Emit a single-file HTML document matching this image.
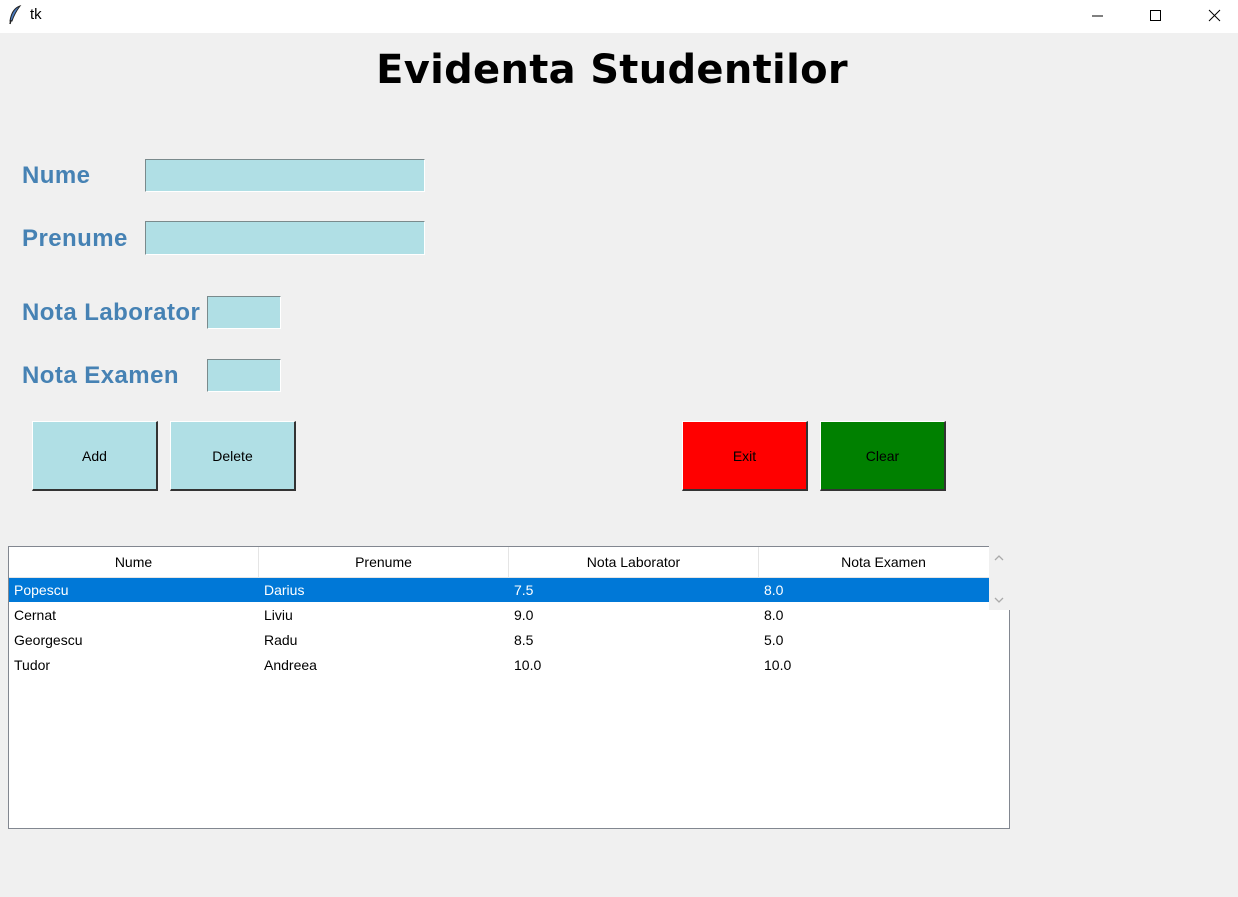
<!DOCTYPE html>
<html><head><style>
*{margin:0;padding:0;box-sizing:border-box}
body{width:1238px;height:897px;background:#f0f0f0;position:relative;overflow:hidden;font-family:"Liberation Sans",sans-serif}
.a{position:absolute}
.tb{left:0;top:0;width:1238px;height:33px;background:#fff}
.lbl{color:#4682b4;font-weight:bold;font-size:24px;letter-spacing:0.45px}
.ent{background:#b0dfe5;border-top:1px solid #7a8a8c;border-left:1px solid #7a8a8c;border-bottom:1px solid #fff;border-right:1px solid #fff}
.btn{height:70px;width:126px;border-top:1px solid #fff;border-left:1px solid #fff;border-right:2px solid #333;border-bottom:2px solid #333;font-size:14px;display:flex;align-items:center;justify-content:center;color:#000}
.t{font-size:14px;color:#000}
</style></head><body>
<div class="a tb"></div>
<svg class="a" style="left:8px;top:5px" width="14" height="20" viewBox="0 0 14 20"><path d="M12 1 C6 3 3 9 2 16 L4 16 C6 10 9 5 12 1Z" fill="#4a7bc0" stroke="#222" stroke-width="1"/><path d="M3 15 L2 19" stroke="#222" stroke-width="1.5"/></svg>
<div class="a" style="left:30px;top:6px;font-size:15px">tk</div>
<svg class="a" style="left:1091px;top:9px" width="135" height="14"><path d="M1 7H12" stroke="#000"/><rect x="59.5" y="1.5" width="10" height="10" fill="none" stroke="#000"/><path d="M118 1L129 12M129 1L118 12" stroke="#000"/></svg>
<div class="a" style="left:0;width:1224px;top:47px;text-align:center;font-size:40px;font-weight:bold;font-family:'DejaVu Sans',sans-serif;letter-spacing:0.3px">Evidenta Studentilor</div>
<div class="a lbl" style="left:22px;top:162px">Nume</div>
<div class="a lbl" style="left:22px;top:225px">Prenume</div>
<div class="a lbl" style="left:22px;top:299px">Nota Laborator</div>
<div class="a lbl" style="left:22px;top:362px">Nota Examen</div>
<div class="a ent" style="left:145px;top:159px;width:280px;height:33px"></div>
<div class="a ent" style="left:145px;top:221px;width:280px;height:34px"></div>
<div class="a ent" style="left:207px;top:296px;width:74px;height:33px"></div>
<div class="a ent" style="left:207px;top:359px;width:74px;height:33px"></div>
<div class="a btn" style="left:32px;top:421px;background:#b0dfe5">Add</div>
<div class="a btn" style="left:170px;top:421px;background:#b0dfe5">Delete</div>
<div class="a btn" style="left:682px;top:421px;background:#ff0000">Exit</div>
<div class="a btn" style="left:820px;top:421px;background:#008000">Clear</div>
<div class="a" style="left:8px;top:546px;width:1002px;height:283px;background:#fff;border:1px solid #828790"></div>
<div class="a" style="left:989px;top:546px;width:21px;height:64px;background:#f0f0f0"></div>
<svg class="a" style="left:992px;top:553px" width="14" height="52"><path d="M3 7L7 3L11 7" fill="none" stroke="#aaa" stroke-width="1.3"/><path d="M3 45L7 49L11 45" fill="none" stroke="#aaa" stroke-width="1.3"/></svg>
<div class="a" style="left:9px;top:547px;width:980px;height:31px;background:#fff;border-bottom:1px solid #e5e5e5"></div>
<div class="a" style="left:258px;top:547px;width:1px;height:30px;background:#e5e5e5"></div>
<div class="a" style="left:508px;top:547px;width:1px;height:30px;background:#e5e5e5"></div>
<div class="a" style="left:758px;top:547px;width:1px;height:30px;background:#e5e5e5"></div>
<div class="a t" style="left:9px;width:249px;top:554px;text-align:center">Nume</div>
<div class="a t" style="left:259px;width:249px;top:554px;text-align:center">Prenume</div>
<div class="a t" style="left:509px;width:249px;top:554px;text-align:center">Nota Laborator</div>
<div class="a t" style="left:759px;width:249px;top:554px;text-align:center">Nota Examen</div>
<div class="a" style="left:9px;top:578px;width:980px;height:24px;background:#0078d7"></div>
<div class="a t" style="left:14px;top:582px;color:#fff">Popescu</div><div class="a t" style="left:264px;top:582px;color:#fff">Darius</div><div class="a t" style="left:514px;top:582px;color:#fff">7.5</div><div class="a t" style="left:764px;top:582px;color:#fff">8.0</div>
<div class="a t" style="left:14px;top:607px">Cernat</div><div class="a t" style="left:264px;top:607px">Liviu</div><div class="a t" style="left:514px;top:607px">9.0</div><div class="a t" style="left:764px;top:607px">8.0</div>
<div class="a t" style="left:14px;top:632px">Georgescu</div><div class="a t" style="left:264px;top:632px">Radu</div><div class="a t" style="left:514px;top:632px">8.5</div><div class="a t" style="left:764px;top:632px">5.0</div>
<div class="a t" style="left:14px;top:657px">Tudor</div><div class="a t" style="left:264px;top:657px">Andreea</div><div class="a t" style="left:514px;top:657px">10.0</div><div class="a t" style="left:764px;top:657px">10.0</div>
</body></html>
